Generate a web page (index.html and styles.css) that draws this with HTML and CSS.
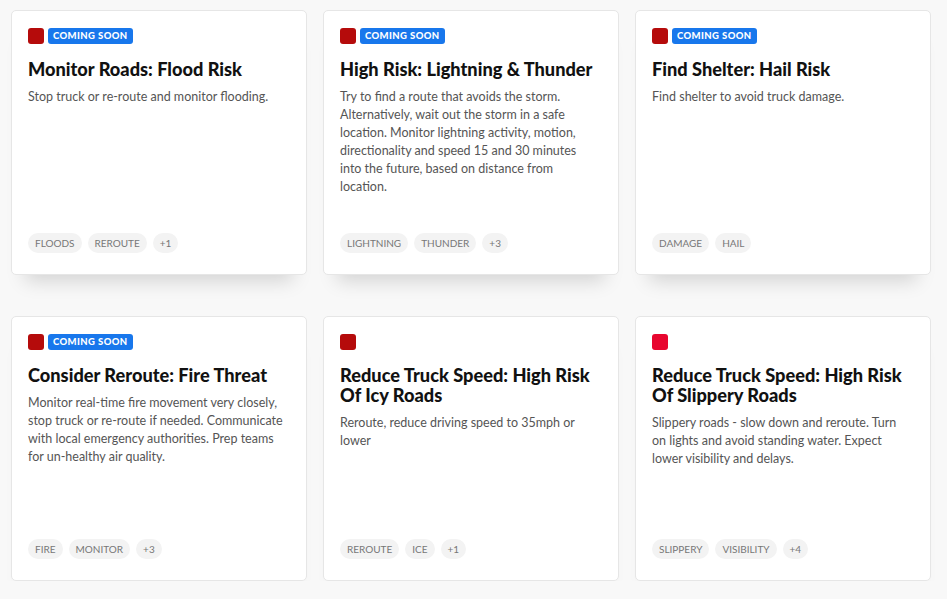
FILE: index.html
```html
<!DOCTYPE html>
<html>
<head>
<meta charset="utf-8">
<meta name="viewport" content="width=device-width, initial-scale=1">
<title>Actions</title>
<link rel="stylesheet" href="styles.css">
</head>
<body>
	<div class="grid">
		<div class="card">
			<div class="top">
				<span class="dot"></span>
				<span class="soon">COMING SOON</span>
			</div>
			<h2>Monitor Roads: Flood Risk</h2>
			<p>Stop truck or re-route and monitor flooding.</p>
			<div class="tags">
				<span class="tag">FLOODS</span>
				<span class="tag">REROUTE</span>
				<span class="tag">+1</span>
			</div>
		</div>

		<div class="card">
			<div class="top">
				<span class="dot"></span>
				<span class="soon">COMING SOON</span>
			</div>
			<h2>High Risk: Lightning &amp; Thunder</h2>
			<p>Try to find a route that avoids the storm. Alternatively, wait out the storm in a safe location. Monitor lightning activity, motion, directionality and speed 15 and 30 minutes into the future, based on distance from location.</p>
			<div class="tags">
				<span class="tag">LIGHTNING</span>
				<span class="tag">THUNDER</span>
				<span class="tag">+3</span>
			</div>
		</div>

		<div class="card">
			<div class="top">
				<span class="dot"></span>
				<span class="soon">COMING SOON</span>
			</div>
			<h2>Find Shelter: Hail Risk</h2>
			<p>Find shelter to avoid truck damage.</p>
			<div class="tags">
				<span class="tag">DAMAGE</span>
				<span class="tag">HAIL</span>
			</div>
		</div>

		<div class="card">
			<div class="top">
				<span class="dot"></span>
				<span class="soon">COMING SOON</span>
			</div>
			<h2>Consider Reroute: Fire Threat</h2>
			<p>Monitor real-time fire movement very closely, stop truck or re-route if needed. Communicate with local emergency authorities. Prep teams for un-healthy air quality.</p>
			<div class="tags">
				<span class="tag">FIRE</span>
				<span class="tag">MONITOR</span>
				<span class="tag">+3</span>
			</div>
		</div>

		<div class="card">
			<div class="top">
				<span class="dot"></span>
			</div>
			<h2>Reduce Truck Speed: High Risk Of Icy Roads</h2>
			<p>Reroute, reduce driving speed to 35mph or lower</p>
			<div class="tags">
				<span class="tag">REROUTE</span>
				<span class="tag">ICE</span>
				<span class="tag">+1</span>
			</div>
		</div>

		<div class="card">
			<div class="top">
				<span class="dot bright"></span>
			</div>
			<h2>Reduce Truck Speed: High Risk Of Slippery Roads</h2>
			<p>Slippery roads - slow down and reroute. Turn on lights and avoid standing water. Expect lower visibility and delays.</p>
			<div class="tags">
				<span class="tag">SLIPPERY</span>
				<span class="tag">VISIBILITY</span>
				<span class="tag">+4</span>
			</div>
		</div>
	</div>
</body>
</html>
```

FILE: styles.css
```css
body {
	margin: 0;
	background-color: #f8f8f8;
	font-family: "Lato", "Noto Sans", sans-serif;
}

.grid {
	display: grid;
	grid-template-columns: repeat(3, 296px);
	column-gap: 16px;
	row-gap: 41px;
	padding: 10px 0 0 11px;
}

.card {
	box-sizing: border-box;
	display: flex;
	flex-direction: column;
	height: 265px;
	padding: 17px 18px 21px 16px;
	background-color: #fff;
	border: 1px solid #e6e6e6;
	border-radius: 5px;
	box-shadow: 0 20px 18px -14px rgba(0, 0, 0, 0.15);
}

.top {
	display: flex;
	align-items: center;
	gap: 4px;
	height: 16px;
}

.dot {
	width: 16px;
	height: 16px;
	border-radius: 3px;
	background-color: #b50b0b;
}

.dot.bright {
	background-color: #e8062f;
}

.soon {
	height: 16px;
	line-height: 16px;
	padding: 0 5px;
	border-radius: 3px;
	background-color: #1877ec;
	color: #fff;
	font-size: 9.5px;
	font-weight: 900;
	letter-spacing: 0.4px;
}

h2 {
	margin: 15px 0 0 0;
	font-size: 18.2px;
	line-height: 20px;
	font-weight: 900;
	color: #111;
}

p {
	margin: 9px 0 0 0;
	font-size: 12.5px;
	line-height: 18px;
	color: #555;
}

.tags {
	display: flex;
	gap: 6px;
	margin-top: auto;
}

.tag {
	height: 20px;
	line-height: 20px;
	padding: 0 7px;
	border-radius: 10px;
	background-color: #f3f3f3;
	color: #777;
	font-size: 10px;
}
```
